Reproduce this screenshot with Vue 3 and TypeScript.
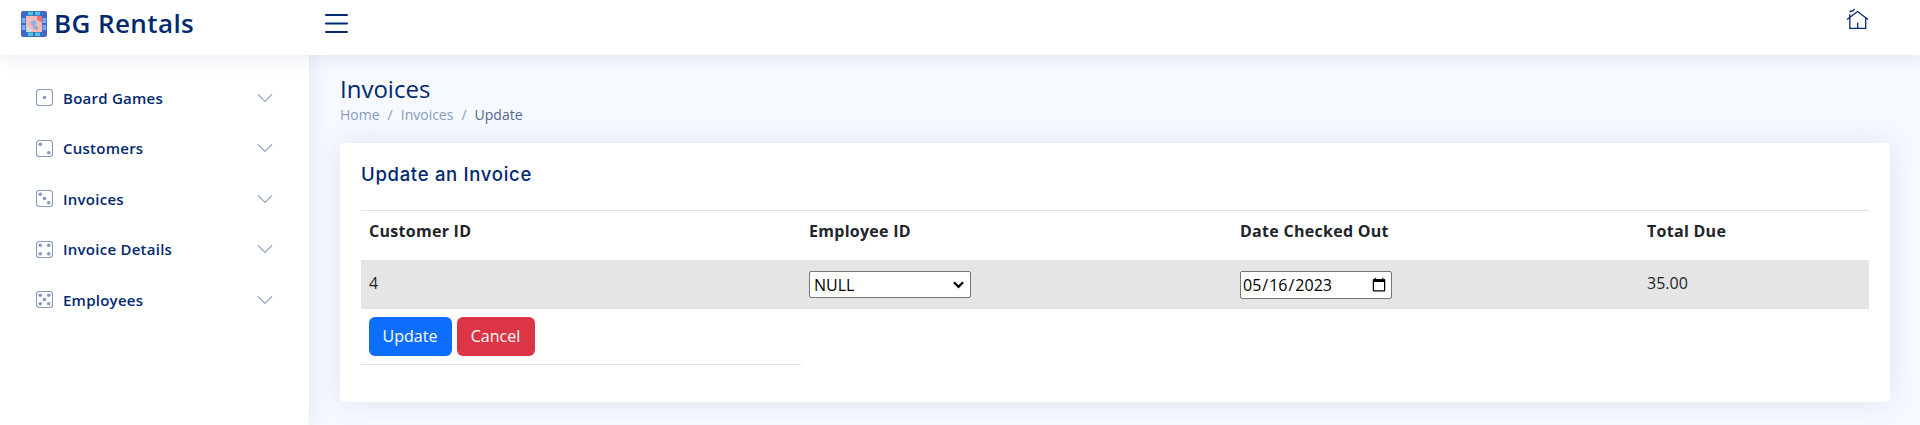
<script setup lang="ts">
import { ref } from 'vue'

interface MenuItem {
  label: string
  pips: [number, number][]
}

const menu: MenuItem[] = [
  { label: 'Board Games', pips: [[8, 8]] },
  { label: 'Customers', pips: [[4, 4], [12, 12]] },
  { label: 'Invoices', pips: [[4, 4], [8, 8], [12, 12]] },
  { label: 'Invoice Details', pips: [[4, 4], [12, 4], [4, 12], [12, 12]] },
  { label: 'Employees', pips: [[4, 4], [12, 4], [8, 8], [4, 12], [12, 12]] },
]

const columns: string[] = ['Customer ID', 'Employee ID', 'Date Checked Out', 'Total Due']
const employee = ref('NULL')
const checkedOut = ref('2023-05-16')
</script>

<template>
  <div class="page">
    <header class="header">
      <a class="logo">
        <svg class="logo-mark" viewBox="0 0 26 26">
          <rect width="26" height="26" rx="2" fill="#4068c8" />
          <path d="M7 .8h5v3.4H7zM14 .8h5v3.4h-5zM7 21.6h5V25H7zM14 21.6h5V25h-5z" fill="#4cc9d6" />
          <path d="M.8 7h3.6v5H.8zM.8 14h3.6v5H.8zM21.6 7h3.6v5h-3.6zM21.6 14h3.6v5h-3.6z" fill="#7faaf5" />
          <rect x="5" y="5" width="16" height="16" fill="#f6b9b4" />
          <path d="M16 5h5v5.2l-2 .6-3-2.600z" fill="#e66f78" />
          <circle cx="12.500" cy="12" r="2.800" fill="#8fb2ee" />
          <path d="M5 15l3 1 3 3-1 2H7l-2-3z" fill="#c9dcf8" />
          <path d="M12 13l2 3 2-2 2 3-2 2-4-2z" fill="#8fa6cf" />
          <path d="M16 13l2 3-1 1.500z" fill="#ecd27a" />
        </svg>
        <span class="logo-text">BG Rentals</span>
      </a>
      <svg class="toggle" viewBox="0 0 32 32" fill="none" stroke="currentColor" stroke-width="2" stroke-linecap="round">
        <path d="M6 8h21M6 16.400h21M6 24.900h21" />
      </svg>
      <svg class="home" viewBox="0 0 22 22" fill="none" stroke="currentColor" stroke-width="1.300">
        <path d="M.5 11.500L11 3.600l10.500 7.900M3.300 6.200V20.400h15.900V9.800M11.200 20v-5.500" />
        <path d="M3.300 4.200c.2-1.900 2.500-.8 3.300-1.400.7-.4.5-1.300 1.700-1.600" />
      </svg>
    </header>

    <div class="body">
      <aside class="sidebar">
        <a v-for="item in menu" :key="item.label" class="nav-link">
          <svg class="die" viewBox="0 0 16 16">
            <rect x=".5" y=".5" width="15" height="15" rx="2.500" fill="none" stroke="currentColor" />
            <circle v-for="(p, i) in item.pips" :key="i" :cx="p[0]" :cy="p[1]" r="1.700" fill="currentColor" />
          </svg>
          <span class="nav-label">{{ item.label }}</span>
          <svg class="chevron" viewBox="0 0 16 16" fill="none" stroke="currentColor" stroke-linecap="round" stroke-linejoin="round">
            <path d="M2 5l6 6 6-6" />
          </svg>
        </a>
      </aside>

      <main class="main">
        <h1 class="title">Invoices</h1>
        <nav class="crumbs">
          <a>Home</a><span class="sep">/</span><a>Invoices</a><span class="sep">/</span><span class="current">Update</span>
        </nav>
        <section class="card">
          <h5 class="card-title">Update an Invoice</h5>
          <table class="table">
            <colgroup>
              <col class="c1" /><col class="c2" /><col class="c3" /><col class="c4" />
            </colgroup>
            <thead>
              <tr>
                <th v-for="c in columns" :key="c">{{ c }}</th>
              </tr>
            </thead>
            <tbody>
              <tr class="record">
                <td>4</td>
                <td>
                  <div class="select-wrap">
                    <select v-model="employee" class="field select">
                      <option value="NULL">NULL</option>
                    </select>
                    <svg class="arrow" viewBox="0 0 12 8" fill="none" stroke="#000" stroke-width="2.400">
                      <path d="M1 1l5 5 5-5" />
                    </svg>
                  </div>
                </td>
                <td><input v-model="checkedOut" type="date" class="field date" /></td>
                <td>35.00</td>
              </tr>
              <tr class="actions">
                <td>
                  <div class="buttons">
                    <button type="button" class="btn primary">Update</button>
                    <button type="button" class="btn danger">Cancel</button>
                  </div>
                </td>
              </tr>
            </tbody>
          </table>
        </section>
      </main>
    </div>
  </div>
</template>

<style>
body {
  margin: 0;
  background: #f6f9ff;
}
</style>

<style scoped>
.page {
  height: 425px;
  overflow: hidden;
  display: flex;
  flex-direction: column;
  font: 16px/24px "Open Sans", "Noto Sans", sans-serif;
  color: #212529;
  background: #f6f9ff;
}
.page * {
  box-sizing: border-box;
}
.header {
  height: 55px;
  flex: none;
  position: relative;
  z-index: 2;
  display: flex;
  align-items: flex-start;
  padding: 0 51px 0 21px;
  background: #fff;
  color: #012970;
  box-shadow: 0 2px 20px rgba(1, 41, 112, 0.1);
}
.logo {
  display: flex;
  align-items: center;
  width: 299px;
  height: 48px;
}
.logo-mark {
  width: 26px;
  height: 26px;
  margin-right: 6px;
}
.logo-text {
  padding: 0 0 2px 1px;
  font: 600 26px/46px "Open Sans", sans-serif;
  letter-spacing: 0.4px;
  white-space: nowrap;
}
.toggle {
  width: 32px;
  height: 32px;
  margin-top: 7px;
}
.home {
  width: 23px;
  height: 22px;
  margin: 8px 0 0 auto;
}
.body {
  flex: 1;
  display: flex;
}
.sidebar {
  width: 309px;
  flex: none;
  padding: 20px 20px 0;
  background: #fff;
  box-shadow: 0 0 20px rgba(1, 41, 112, 0.1);
}
.nav-link {
  display: flex;
  align-items: center;
  height: 45px;
  margin-bottom: 5.600px;
  padding: 0 15px 0 16px;
  color: #012970;
}
.die {
  width: 17px;
  height: 17px;
  margin-right: 10px;
  color: #899bbd;
}
.nav-label {
  font-size: 15px;
  font-weight: 600;
  letter-spacing: 0.25px;
}
.chevron {
  width: 18px;
  height: 18px;
  margin-left: auto;
  color: #899bbd;
}
.main {
  flex: 1;
  padding: 19px 30px 0 31px;
}
.title {
  margin: 0;
  font: 500 24px/29px "Open Sans", sans-serif;
  color: #012970;
}
.crumbs {
  display: flex;
  margin: 1px 0 17px;
  font: 500 14px/22px "Open Sans", sans-serif;
  color: #899bbd;
}
.sep {
  padding: 0 8px;
}
.current {
  color: #51678f;
}
.card {
  height: 259px;
  padding: 20px 21px 0;
  border-radius: 5px;
  background: #fff;
  box-shadow: 0 0 30px rgba(1, 41, 112, 0.1);
}
.card-title {
  margin: 0 0 25px;
  font: 500 18.500px/22px Inter, sans-serif;
  letter-spacing: 0.7px;
  color: #012970;
}
.table {
  width: 1508px;
  table-layout: fixed;
  border-collapse: separate;
  border-spacing: 0;
}
.c1 { width: 440px; }
.c2 { width: 431px; }
.c3 { width: 407px; }
.c4 { width: 230px; }
th {
  height: 51px;
  padding: 8px;
  border-top: 1px solid #dee2e6;
  border-bottom: 1px solid #dee2e6;
  font-weight: 700;
  letter-spacing: 0.28px;
  text-align: left;
  vertical-align: top;
}
td {
  padding: 8px;
  vertical-align: top;
}
.record td {
  height: 48px;
  padding-top: 10px;
  border-bottom: 1px solid #dee2e6;
  background: #e5e5e5;
}
.field {
  display: block;
  margin: 0;
  font: inherit;
  color: #000;
}
.select-wrap {
  position: relative;
  width: 162px;
}
.select {
  appearance: none;
  width: 162px;
  height: 27px;
  padding: 0 4px;
  border: 1px solid #767676;
  border-radius: 2px;
  background: #fff;
}
.arrow {
  position: absolute;
  top: 10px;
  right: 7px;
  width: 11px;
  height: 8px;
}
.date {
  width: 152px;
  height: 28px;
  padding: 0 2px 0 1px;
  border: 1px solid #767676;
  border-radius: 2px;
}
.actions td {
  height: 55px;
  border-bottom: 1px solid #dee2e6;
}
.buttons {
  display: flex;
  gap: 5px;
}
.btn {
  height: 39px;
  width: 83px;
  padding: 0 1px 2px 0;
  border: 0;
  border-radius: 6px;
  font: inherit;
  color: #fff;
}
.primary { background: #0d6efd; }
.danger { width: 78px; background: #dc3545; }
</style>
